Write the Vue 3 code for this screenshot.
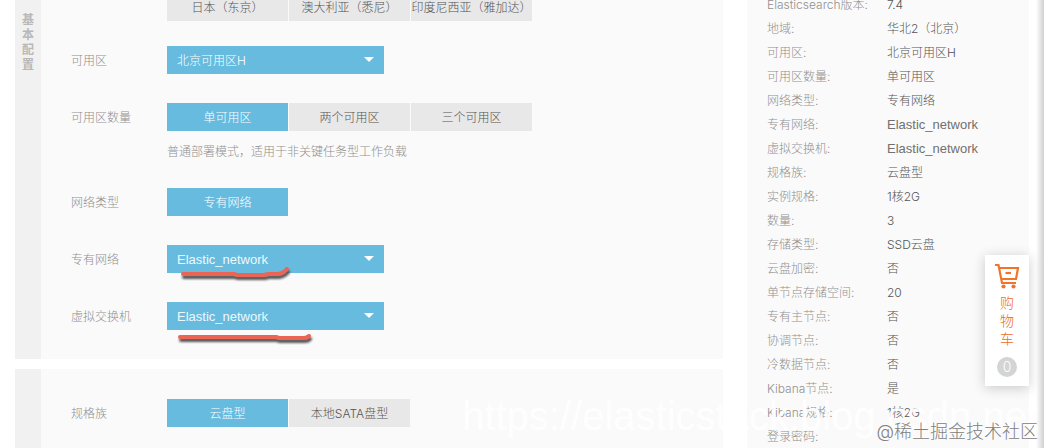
<script setup>
import { ref } from 'vue'

const regions = ['日本（东京）', '澳大利亚（悉尼）', '印度尼西亚（雅加达）']
const zoneCounts = ['单可用区', '两个可用区', '三个可用区']
const specs = ['云盘型', '本地SATA盘型']

const zoneCount = ref('单可用区')
const spec = ref('云盘型')
const region = ref('')
const zone = ref('北京可用区H')
const vpc = ref('Elastic_network')
const vswitch = ref('Elastic_network')

const summary = [
  ['Elasticsearch版本:', '7.4'],
  ['地域:', '华北2（北京）'],
  ['可用区:', '北京可用区H'],
  ['可用区数量:', '单可用区'],
  ['网络类型:', '专有网络'],
  ['专有网络:', 'Elastic_network', true],
  ['虚拟交换机:', 'Elastic_network', true],
  ['规格族:', '云盘型'],
  ['实例规格:', '1核2G'],
  ['数量:', '3'],
  ['存储类型:', 'SSD云盘'],
  ['云盘加密:', '否'],
  ['单节点存储空间:', '20'],
  ['专有主节点:', '否'],
  ['协调节点:', '否'],
  ['冷数据节点:', '否'],
  ['Kibana节点:', '是'],
  ['Kibana规格:', '1核2G'],
  ['登录密码:', '']
]
</script>

<template>
  <div class="page">
    <main class="main">
      <section class="panel">
        <h2 class="side">基本配置</h2>
        <div class="content">
          <div class="row first">
            <span class="label"></span>
            <div class="group">
              <button v-for="r in regions" :key="r" type="button" class="opt" :class="{ on: region === r }" @click="region = r">{{ r }}</button>
            </div>
          </div>
          <div class="row">
            <label class="label" for="zone">可用区</label>
            <div class="field">
              <select id="zone" v-model="zone"><option>北京可用区H</option></select>
              <i class="arrow"></i>
            </div>
          </div>
          <div class="row count">
            <span class="label">可用区数量</span>
            <div class="group">
              <button v-for="z in zoneCounts" :key="z" type="button" class="opt" :class="{ on: zoneCount === z }" @click="zoneCount = z">{{ z }}</button>
            </div>
          </div>
          <p class="hint">普通部署模式，适用于非关键任务型工作负载</p>
          <div class="row">
            <span class="label">网络类型</span>
            <div class="group"><button type="button" class="opt on">专有网络</button></div>
          </div>
          <div class="row">
            <label class="label" for="vpc">专有网络</label>
            <div class="field">
              <select id="vpc" v-model="vpc" class="latin"><option>Elastic_network</option></select>
              <i class="arrow"></i>
              <svg class="mark" width="160" height="24" viewBox="0 0 160 24" aria-hidden="true">
                <path d="M16 9H67L70 10H97L101 9H111Q117 8 120 4" />
              </svg>
            </div>
          </div>
          <div class="row">
            <label class="label" for="vswitch">虚拟交换机</label>
            <div class="field">
              <select id="vswitch" v-model="vswitch" class="latin"><option>Elastic_network</option></select>
              <i class="arrow"></i>
              <svg class="mark" width="160" height="24" viewBox="0 0 160 24" aria-hidden="true">
                <path d="M13 15H109L112 16H137Q140 16 142 14" />
              </svg>
            </div>
          </div>
        </div>
      </section>

      <section class="panel last">
        <div class="side"></div>
        <div class="content">
          <div class="row">
            <span class="label">规格族</span>
            <div class="group">
              <button v-for="s in specs" :key="s" type="button" class="opt" :class="{ on: spec === s }" @click="spec = s">{{ s }}</button>
            </div>
          </div>
        </div>
      </section>
    </main>

    <aside class="summary">
      <dl>
        <div v-for="[k, v, latin] in summary" :key="k" class="item">
          <dt>{{ k }}</dt>
          <dd :class="{ latin }">{{ v }}</dd>
        </div>
      </dl>
    </aside>

    <div class="edge"></div>
    <div class="watermark">https://elasticstack.blog.csdn.net</div>
    <div class="credit">@稀土掘金技术社区</div>

    <button type="button" class="cart">
      <svg width="26" height="26" viewBox="0 0 26 26" fill="none" stroke="#f0752b" stroke-width="2.2" aria-hidden="true">
        <path d="M1 2H4.500L8 20H22" />
        <path d="M5 5H24L22 16H7" />
        <path d="M11.500 10H17" />
        <circle cx="9.500" cy="23.500" r="2.100" fill="#f0752b" stroke="none" />
        <circle cx="19.500" cy="23.500" r="2.100" fill="#f0752b" stroke="none" />
      </svg>
      <span class="cart-text">购物车</span>
      <span class="badge">0</span>
    </button>
  </div>
</template>

<style>
body {
  margin: 0;
  background: #fff;
}
</style>

<style scoped>
.page {
  position: relative;
  display: flex;
  gap: 24px;
  height: 100vh;
  padding: 0 15px;
  box-sizing: border-box;
  overflow: hidden;
  font-family: Inter, "Noto Sans CJK SC", sans-serif;
  font-size: 12px;
  font-weight: 300;
  line-height: 24px;
  color: #555;
}
.main {
  flex: 1;
  display: flex;
  flex-direction: column;
  gap: 10px;
  min-width: 0;
}
.panel {
  display: flex;
  background: #fafafa;
}
.last {
  flex: 1;
}
.side {
  flex: none;
  width: 26px;
  box-sizing: border-box;
  margin: 0;
  padding: 12px 7px;
  background: #f1f1f1;
  color: #b8b8b8;
  font-size: 12px;
  font-weight: 700;
  line-height: 15px;
}
.content {
  flex: 1;
  padding: 0 30px 29px;
}
.last .content {
  padding-top: 30px;
}
.row {
  display: flex;
  align-items: center;
  height: 28px;
  margin-bottom: 29px;
}
.row:last-child {
  margin-bottom: 0;
}
.first {
  margin-top: -7px;
  margin-bottom: 25px;
}
.count {
  margin-bottom: 9px;
}
.label {
  flex: none;
  width: 96px;
  padding-top: 2px;
  color: #909090;
}
.group {
  display: flex;
  gap: 1px;
}
.opt {
  width: 121px;
  height: 28px;
  padding: 2px 0 0;
  border: 0;
  background: #e8e8e8;
  color: #555;
  font: inherit;
  white-space: nowrap;
}
.opt.on {
  background: #66bbdf;
  color: #fff;
}
.field {
  position: relative;
  width: 217px;
}
.field select {
  display: block;
  width: 100%;
  height: 28px;
  padding: 2px 30px 0 10px;
  border: 0;
  border-radius: 0;
  appearance: none;
  background: #66bbdf;
  color: #fff;
  font: inherit;
}
.field select.latin,
.item dd.latin {
  font-family: "Liberation Sans", Arial, sans-serif;
  font-size: 13px;
}
.item dd.latin {
  color: #707070;
}
.field select.latin {
  color: #eef8fc;
}
.arrow {
  position: absolute;
  top: 11px;
  right: 10px;
  border: 5px solid transparent;
  border-top-color: #fff;
  border-bottom: 0;
  pointer-events: none;
}
.mark {
  position: absolute;
  top: 20px;
  left: 0;
  overflow: visible;
  fill: none;
  stroke: #ec6453;
  stroke-width: 4;
  stroke-linecap: round;
  stroke-linejoin: round;
  filter: drop-shadow(1px 3px 1px #555);
  pointer-events: none;
}
.hint {
  margin: 0 0 24px 96px;
  color: #909090;
}
.summary {
  flex: none;
  width: 282px;
  box-sizing: border-box;
  padding: 0 20px;
  background: #fafafa;
}
.summary dl {
  margin: -7px 0 0;
}
.item {
  display: flex;
  height: 24px;
}
.item dt {
  flex: none;
  width: 120px;
  color: #909090;
}
.item dd {
  margin: 0;
}
.edge {
  position: absolute;
  top: 0;
  right: 0;
  bottom: 0;
  width: 8px;
  background: linear-gradient(to right, transparent, #d0d0d0);
}
.watermark {
  position: absolute;
  right: 6px;
  bottom: 9px;
  color: rgba(255, 255, 255, 0.9);
  font-family: "Liberation Sans", Arial, sans-serif;
  font-size: 40px;
  font-weight: 400;
  line-height: 46px;
  white-space: nowrap;
}
.credit {
  position: absolute;
  right: 6px;
  bottom: 3px;
  color: #808080;
  font-size: 18px;
  line-height: 26px;
  text-shadow: -1px -1px 0 #fff;
  white-space: nowrap;
}
.cart {
  position: absolute;
  top: 255px;
  right: 15px;
  display: flex;
  flex-direction: column;
  align-items: center;
  width: 44px;
  padding: 8px 0 9px;
  border: 0;
  background: #fff;
  box-shadow: 0 2px 12px rgba(0, 0, 0, 0.2);
  color: #ee6a1c;
  font: inherit;
}
.cart-text {
  width: 14px;
  margin: 5px 0 9px;
  font-size: 14px;
  line-height: 18px;
}
.badge {
  width: 20px;
  height: 20px;
  border-radius: 50%;
  background: #d2d4d6;
  color: #fff;
  font-size: 14px;
  line-height: 20px;
}
</style>
